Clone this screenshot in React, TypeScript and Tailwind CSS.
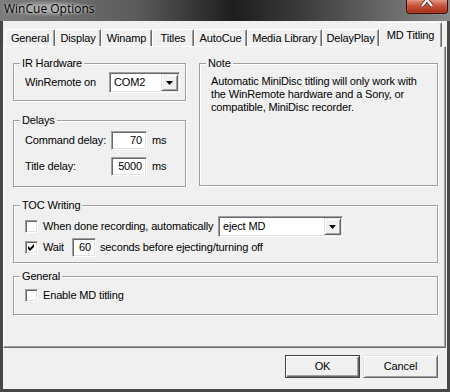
import React from 'react';

const ui = "font-['Liberation_Sans',Arial,sans-serif] text-[11px] leading-[13px] tracking-[-0.15px] text-black whitespace-nowrap";

const sunken =
  'bg-white border border-t-[#a0a0a0] border-l-[#a0a0a0] border-b-white border-r-white shadow-[inset_1px_1px_0_#696969,inset_-1px_-1px_0_#e3e3e3]';

const raised =
  'bg-[#f0f0f0] border border-t-[#e3e3e3] border-l-[#e3e3e3] border-b-[#696969] border-r-[#696969] shadow-[inset_1px_1px_0_#fff,inset_-1px_-1px_0_#a0a0a0]';

const tabs = [
    { label: 'General', w: 'w-[50px]' },
    { label: 'Display', w: 'w-[46px]' },
    { label: 'Winamp', w: 'w-[51px]' },
    { label: 'Titles', w: 'w-[42px]' },
    { label: 'AutoCue', w: 'w-[53px]' },
    { label: 'Media Library', w: 'w-[75px]' },
    { label: 'DelayPlay', w: 'w-[57px]' },
    { label: 'MD Titling', w: 'w-[63px]', active: true },
];

const Arrow = () => (
    <svg width="7" height="4" viewBox="0 0 7 4">
        <path d="M0 0h7L3.5 4z" fill="#000" />
    </svg>
);

const Combo: React.FC<{ value: string; className: string }> = ({ value, className }) => (
    <div className={`flex h-[21px] p-[1px] ${sunken} ${className}`}>
        <span className="flex-1 pl-[3px] leading-[17px]">{value}</span>
        <span className={`w-[17px] flex items-center justify-center ${raised}`}>
            <Arrow />
        </span>
    </div>
);

const NumField: React.FC<{ value: string; className: string }> = ({ value, className }) => (
    <div className={`h-[19px] pr-[4px] text-right leading-[17px] ${sunken} ${className}`}>{value}</div>
);

const CheckBox: React.FC<{ checked?: boolean }> = ({ checked }) => (
    <span className={`flex w-[13px] h-[13px] shrink-0 items-center justify-center ${sunken}`}>
        {checked && (
            <svg width="7" height="7" viewBox="0 0 7 7">
                <path d="M0 2L2 4L6 0V3L2 7L0 5Z" fill="#000" />
            </svg>
        )}
    </span>
);

const GroupBox: React.FC<{ label: string; className: string; children?: React.ReactNode }> = ({ label, className, children }) => (
    <div className={`relative border border-[#a0a0a0] shadow-[inset_1px_1px_0_#fff,1px_1px_0_#fff] ${className}`}>
        <span className="absolute -top-[7px] left-[6px] bg-[#f0f0f0] px-[2px]">{label}</span>
        {children}
    </div>
);

const Button: React.FC<{ label: string; isDefault?: boolean }> = ({ label, isDefault }) => (
    <div
        className={`w-[75px] h-[23px] flex items-center justify-center ${
            isDefault
                ? 'bg-[#f0f0f0] border border-[#404040] shadow-[inset_1px_1px_0_#fff,inset_-1px_-1px_0_#696969,inset_-2px_-2px_0_#a0a0a0]'
                : raised
        }`}
    >
        {label}
    </div>
);

export default function App() {
    return (
        <div className={`w-[450px] h-[392px] flex flex-col bg-[#474747] ${ui}`}>
            {/* title bar */}
            <div className="h-[21px] flex items-start bg-[linear-gradient(90deg,#7d7d7d_0%,#5c5c5c_30%,#1d1d1d_52%,#3e3e3e_68%,#8a8a8a_100%)]">
                <span className="ml-[3px] mt-[1px] px-[1px] font-['Open_Sans',sans-serif] text-[12px] leading-[15px] tracking-normal text-black bg-[radial-gradient(ellipse_at_center,rgba(210,210,210,0.55)_30%,rgba(210,210,210,0)_75%)] [text-shadow:0_0_3px_rgba(255,255,255,0.6)]">
                    WinCue Options
                </span>
                <div className="ml-auto mr-[2px] w-[42px] h-[14px] rounded-b-[4px] border border-t-0 border-[#3b0d08] bg-[linear-gradient(180deg,#e2927f_0%,#c7533b_45%,#a52c14_100%)] shadow-[inset_0_0_1px_#ffd0c0] flex justify-center overflow-hidden">
                    <svg width="16" height="10" viewBox="0 0 16 10">
                        <path d="M3 -6L13 6M13 -6L3 6" stroke="#5a1a10" strokeWidth="4" />
                        <path d="M3 -6L13 6M13 -6L3 6" stroke="#fff" strokeWidth="2.4" />
                    </svg>
                </div>
            </div>

            {/* client */}
            <div className="mx-[3px] mb-[3px] flex-1 bg-[#f0f0f0] flex flex-col">
                <div className="mt-[1px] h-[24px] pl-[2px] flex items-end relative z-10">
                    {tabs.map(t =>
                        t.active ? (
                            <div
                                key={t.label}
                                className={`${t.w} h-[25px] -mb-[1px] bg-[#f0f0f0] border-l border-t border-r border-l-white border-t-white border-r-[#696969] rounded-t-[2px] shadow-[inset_-1px_0_0_#a0a0a0] flex justify-center pt-[6px]`}
                            >
                                {t.label}
                            </div>
                        ) : (
                            <div
                                key={t.label}
                                className={`${t.w} h-[17px] bg-[#f0f0f0] border-l border-t border-r border-l-white border-t-white border-r-[#696969] rounded-t-[2px] shadow-[inset_-1px_0_0_#a0a0a0] flex items-center justify-center`}
                            >
                                {t.label}
                            </div>
                        )
                    )}
                </div>

                <div className="mr-[1px] h-[302px] border border-t-white border-l-white border-r-[#696969] border-b-[#696969] shadow-[inset_-1px_-1px_0_#a0a0a0] pl-[9px] pt-[16px]">
                    <div className="flex">
                        <div className="w-[173px] flex flex-col">
                            <GroupBox label="IR Hardware" className="h-[38px]">
                                <div className="flex items-center pt-[8px] pl-[11px]">
                                    <span className="w-[84px]">WinRemote on</span>
                                    <Combo value="COM2" className="w-[71px]" />
                                </div>
                            </GroupBox>
                            <GroupBox label="Delays" className="mt-[19px] h-[67px]">
                                <div className="flex flex-col gap-[7px] pt-[10px] pl-[11px]">
                                    <div className="flex items-center">
                                        <span className="w-[86px]">Command delay:</span>
                                        <NumField value="70" className="w-[36px]" />
                                        <span className="ml-[5px]">ms</span>
                                    </div>
                                    <div className="flex items-center">
                                        <span className="w-[86px]">Title delay:</span>
                                        <NumField value="5000" className="w-[36px]" />
                                        <span className="ml-[5px]">ms</span>
                                    </div>
                                </div>
                            </GroupBox>
                        </div>
                        <GroupBox label="Note" className="ml-[13px] w-[239px] h-[123px]">
                            <p className="pt-[11px] pl-[11px]">
                                Automatic MiniDisc titling will only work with
                                <br />
                                the WinRemote hardware and a Sony, or
                                <br />
                                compatible, MiniDisc recorder.
                            </p>
                        </GroupBox>
                    </div>

                    <GroupBox label="TOC Writing" className="mt-[18px] w-[425px] h-[58px]">
                        <div className="flex flex-col pt-[10px] pl-[11px]">
                            <div className="h-[21px] flex items-center">
                                <CheckBox />
                                <span className="ml-[5px] w-[175px]">When done recording, automatically</span>
                                <Combo value="eject MD" className="w-[125px]" />
                            </div>
                            <div className="mt-[1px] h-[19px] flex items-center">
                                <CheckBox checked />
                                <span className="ml-[5px] w-[29px]">Wait</span>
                                <NumField value="60" className="w-[24px]" />
                                <span className="ml-[4px]">seconds before ejecting/turning off</span>
                            </div>
                        </div>
                    </GroupBox>

                    <GroupBox label="General" className="mt-[13px] w-[425px] h-[39px]">
                        <div className="flex items-center pt-[12px] pl-[11px]">
                            <CheckBox />
                            <span className="ml-[5px]">Enable MD titling</span>
                        </div>
                    </GroupBox>
                </div>

                <div className="mt-[7px] flex justify-end gap-[3px] pr-[9px]">
                    <Button label="OK" isDefault />
                    <Button label="Cancel" />
                </div>
            </div>
        </div>
    );
}
